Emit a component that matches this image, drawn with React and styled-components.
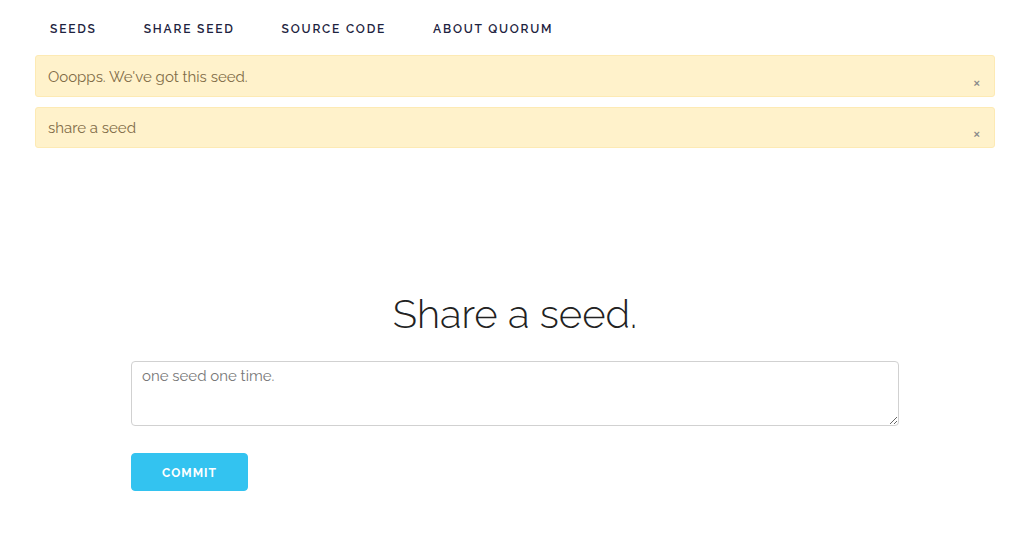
import React from "react";
import styled, { createGlobalStyle } from "styled-components";

const GlobalStyle = createGlobalStyle`
  html, body { margin: 0; padding: 0; background: #fff; }
  body {
    font-family: "Raleway", "Lato", "Open Sans", sans-serif;
    font-size: 15px;
    color: #222;
  }
  * { box-sizing: border-box; }
`;

const links = ["Seeds", "Share Seed", "Source Code", "About Quorum"];

const messages = ["Ooopps. We've got this seed.", "share a seed"];

function App() {
  return (
    <Page>
      <GlobalStyle />
      <Nav>
        {links.map((l) => (
          <NavLink key={l} href="#">{l}</NavLink>
        ))}
      </Nav>
      <Alerts>
        {messages.map((m) => (
          <Alert key={m}>
            <AlertText>{m}</AlertText>
            <Close aria-label="close">×</Close>
          </Alert>
        ))}
      </Alerts>
      <Section>
        <Heading>Share a seed.</Heading>
        <Form>
          <TextArea placeholder="one seed one time." />
          <Commit type="button">Commit</Commit>
        </Form>
      </Section>
    </Page>
  );
}

// --- styles ---
const Page = styled.div` width: 960px; margin: 0 auto 0 35px; `;
const Nav = styled.nav` display: flex; gap: 47px; padding: 21px 15px 0; height: 55px; `;
const NavLink = styled.a` font-size: 12px; font-weight: 600; letter-spacing: 1.8px; text-transform: uppercase; color: #1d2340; text-decoration: none; line-height: 16px; `;
const Alerts = styled.div` display: flex; flex-direction: column; gap: 10px; `;
const Alert = styled.div` display: flex; align-items: center; height: 42px; padding: 1px 14px 0 12px; background: #fff2cb; border: 1px solid #fdeab4; border-radius: 3px; color: #7f6c47; & + & { height: 41px; } `;
const AlertText = styled.div` flex: 1; font-size: 15px; line-height: 20px; `;
const Close = styled.button` align-self: flex-end; margin-bottom: 8px; background: none; border: 0; padding: 0; font-size: 11px; line-height: 10px; color: #8a8a8a; font-weight: 700; cursor: pointer; `;
const Section = styled.div` display: flex; flex-direction: column; align-items: center; padding-top: 142px; `;
const Heading = styled.h1` margin: 0 0 23px; font-size: 40px; font-weight: 300; line-height: 48px; color: #222; `;
const Form = styled.form` width: 768px; align-self: flex-start; margin-left: 96px; display: flex; flex-direction: column; align-items: flex-start; gap: 27px; `;
const TextArea = styled.textarea` width: 768px; height: 65px; padding: 5px 10px 6px; border: 1px solid #d1d1d1; border-radius: 4px; font-family: inherit; font-size: 15px; color: #222; &::placeholder { color: #777; } `;
const Commit = styled.button` width: 117px; height: 38px; padding: 2px 0 0; background: #33c3f0; border: 1px solid #33c3f0; border-radius: 4px; color: #fff; font-family: inherit; font-size: 12px; font-weight: 700; letter-spacing: 1px; text-transform: uppercase; cursor: pointer; `;

export default App;
